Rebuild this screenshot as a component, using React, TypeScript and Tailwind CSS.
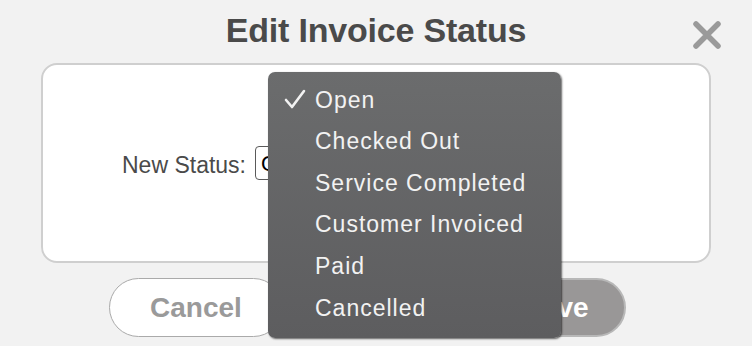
import React from "react";

const items = ["Open", "Checked Out", "Service Completed", "Customer Invoiced", "Paid", "Cancelled"];

export default function App() {
  return (
    <div className="relative w-[752px] h-[346px] overflow-hidden bg-[#f2f2f2] font-['Liberation_Sans',Arial,sans-serif]">
      <div className="relative pt-[10px] h-[50px] flex justify-center">
        <h1 className="text-[34px] leading-[40px] font-bold text-[#4a4a4a] tracking-[-0.2px]">Edit Invoice Status</h1>
        <button className="absolute left-[691px] top-[20px] w-[32px] h-[30px] flex items-center justify-center">
          <svg width="32" height="30" viewBox="0 0 32 30">
            <path d="M5 4 L27 26 M27 4 L5 26" stroke="#9a9a9a" strokeWidth="5.5" strokeLinecap="round" fill="none" />
          </svg>
        </button>
      </div>

      <div className="mx-[41px] mt-[13px] h-[200px] rounded-[16px] border-2 border-[#cfcfcf] bg-white flex items-center pl-[79px] gap-[9px]">
        <span className="text-[23px] text-[#4a4a4a] leading-none pt-[4px]">New Status:</span>
        <div className="w-[290px] h-[34px] rounded-[4px] border border-[#5a5a5a] flex items-center pl-[5px] text-[22px] text-black">
          Open
        </div>
      </div>

      <div className="mt-[15px] ml-[109px] w-[517px] flex justify-between">
        <button className="w-[174px] h-[59px] rounded-full border-[1.5px] border-[#aaaaaa] bg-white text-[28px] font-bold text-[#9a9a9a]">
          Cancel
        </button>
        <button className="w-[140px] h-[59px] rounded-full border-2 border-[#b8b8b8] bg-[#999797] text-[28px] font-bold text-white">
          Save
        </button>
      </div>

      <div className="absolute left-[268px] top-[72px] w-[293px] h-[266px] rounded-[7px] bg-gradient-to-b from-[#6b6c6d] to-[#5d5d5f] shadow-[1px_1px_2px_rgba(0,0,0,0.6)] pt-[7px]">
        {items.map((it, i) => (
          <div key={it} className="relative h-[41.6px] flex items-center pl-[47px] text-[23px] tracking-[1px] text-[#f2f2f2]">
            {i === 0 && (
              <svg className="absolute left-[16px] top-[10px]" width="22" height="20" viewBox="0 0 22 20">
                <path d="M2 11 L8 18 L20 2" stroke="#f2f2f2" strokeWidth="2.6" strokeLinecap="round" strokeLinejoin="round" fill="none" />
              </svg>
            )}
            {it}
          </div>
        ))}
      </div>
    </div>
  );
}
